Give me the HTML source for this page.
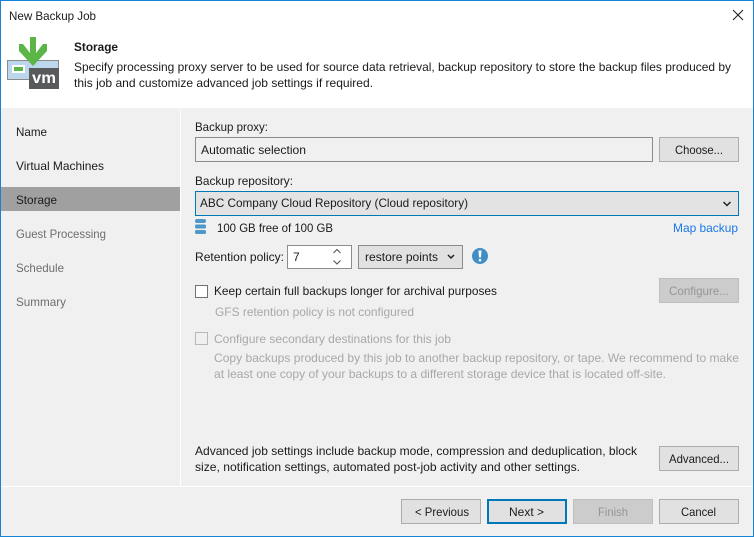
<!DOCTYPE html>
<html><head><meta charset="utf-8"><style>
html,body{margin:0;padding:0;background:#f0f0f0}
svg{display:block}
text{font-family:"Liberation Sans",sans-serif;font-size:12px;fill:#1a1a1a}
.g{fill:#959595}.d{fill:#a8a8a8}.s{fill:#6e6e6e}
.b{fill:#e1e1e1;stroke:#adadad}
</style></head><body>
<svg width="754" height="537" viewBox="0 0 754 537" xmlns="http://www.w3.org/2000/svg">
<rect width="754" height="537" fill="#f0f0f0"/>
<rect x="1" y="1" width="752" height="107" fill="#fff"/>
<rect x="180" y="109" width="1" height="377" fill="#fff"/>
<rect x="1" y="486" width="752" height="1" fill="#fff"/>
<rect x="1" y="187" width="179" height="24" fill="#a0a0a0"/>
<rect x=".5" y=".5" width="753" height="536" fill="none" stroke="#1583d6"/>
<text x="9" y="20" textLength="87" lengthAdjust="spacingAndGlyphs">New Backup Job</text>
<path d="M733 10l10 10M743 10l-10 10" stroke="#222" stroke-width="1.1" fill="none"/>
<rect x="7.500" y="60.500" width="51" height="19" fill="#bcd6ee" stroke="#8a8a8a"/>
<rect x="12" y="65" width="13" height="8" fill="#fff"/><rect x="14" y="67" width="9" height="4" fill="#5cb547"/>
<path d="M30 37H36V53L43 44H47V51L33 66L19 51V44H23L30 53Z" fill="#5cb547"/>
<rect x="29" y="68" width="30" height="21" fill="#58595b"/>
<text x="32" y="83" style="font-size:16px;font-weight:bold;fill:#fff" textLength="24" lengthAdjust="spacingAndGlyphs">vm</text>
<text x="74" y="51" font-weight="bold" textLength="44" lengthAdjust="spacingAndGlyphs">Storage</text>
<text x="74" y="71" textLength="657" lengthAdjust="spacingAndGlyphs">Specify processing proxy server to be used for source data retrieval, backup repository to store the backup files produced by</text>
<text x="74" y="87" textLength="299" lengthAdjust="spacingAndGlyphs">this job and customize advanced job settings if required.</text>
<text x="16" y="136" textLength="31" lengthAdjust="spacingAndGlyphs">Name</text>
<text x="16" y="170" textLength="88" lengthAdjust="spacingAndGlyphs">Virtual Machines</text>
<text x="16" y="204" textLength="41" lengthAdjust="spacingAndGlyphs">Storage</text>
<text x="16" y="238" class="s" textLength="90" lengthAdjust="spacingAndGlyphs">Guest Processing</text>
<text x="16" y="272" class="s" textLength="48" lengthAdjust="spacingAndGlyphs">Schedule</text>
<text x="16" y="306" class="s" textLength="50" lengthAdjust="spacingAndGlyphs">Summary</text>
<text x="195" y="131" textLength="73" lengthAdjust="spacingAndGlyphs">Backup proxy:</text>
<rect x="195.500" y="137.500" width="457" height="24" fill="#f0f0f0" stroke="#8c8c8c"/>
<text x="201" y="154" textLength="105" lengthAdjust="spacingAndGlyphs">Automatic selection</text>
<rect x="659.500" y="137.500" width="79" height="24" class="b"/>
<text x="675" y="154" textLength="48" lengthAdjust="spacingAndGlyphs">Choose...</text>
<text x="195" y="185" textLength="98" lengthAdjust="spacingAndGlyphs">Backup repository:</text>
<rect x="195.500" y="191.500" width="543" height="24" fill="#e3e3e3" stroke="#0078b8"/>
<text x="200" y="207" textLength="268" lengthAdjust="spacingAndGlyphs">ABC Company Cloud Repository (Cloud repository)</text>
<path d="M723.500 202l3.500 3.500 3.500-3.500" fill="none" stroke="#222" stroke-width="1.500"/>
<rect x="195" y="219" width="11" height="4" rx="2" fill="#4d97c9"/>
<rect x="195" y="224.500" width="11" height="4" rx="1.500" fill="#4d97c9"/>
<rect x="195" y="230" width="11" height="4" rx="1.500" fill="#4d97c9"/>
<text x="217" y="232" textLength="116" lengthAdjust="spacingAndGlyphs">100 GB free of 100 GB</text>
<text x="673" y="232" style="fill:#1a78e6" textLength="65" lengthAdjust="spacingAndGlyphs">Map backup</text>
<text x="195" y="261" textLength="89" lengthAdjust="spacingAndGlyphs">Retention policy:</text>
<rect x="287.500" y="245.500" width="64" height="23" fill="#fff" stroke="#8c8c8c"/>
<text x="293" y="261">7</text>
<path d="M333.500 253l3.500-3.500 3.500 3.500M333.500 260.500l3.500 3.500 3.500-3.500" fill="none" stroke="#555" stroke-width="1.100"/>
<rect x="358.500" y="245.500" width="104" height="23" fill="#e1e1e1" stroke="#8c8c8c"/>
<text x="365" y="261" textLength="73" lengthAdjust="spacingAndGlyphs">restore points</text>
<path d="M448 255l3 3 3-3" fill="none" stroke="#222" stroke-width="1.500"/>
<circle cx="480" cy="256" r="8" fill="#3f8fc6"/>
<path d="M478.500 250.500h3l-.5 7h-2zM478.800 259h2.400v2.400h-2.400z" fill="#fff"/>
<rect x="195.500" y="285.500" width="12" height="12" fill="#fff" stroke="#707070"/>
<text x="214" y="295" textLength="283" lengthAdjust="spacingAndGlyphs">Keep certain full backups longer for archival purposes</text>
<rect x="659.500" y="278.500" width="79" height="24" fill="#cccccc" stroke="#bfbfbf"/>
<text x="669" y="295" class="g" textLength="60" lengthAdjust="spacingAndGlyphs">Configure...</text>
<text x="215" y="316" class="d" textLength="199" lengthAdjust="spacingAndGlyphs">GFS retention policy is not configured</text>
<rect x="195.500" y="332.500" width="12" height="12" fill="#f0f0f0" stroke="#b8b8b8"/>
<text x="214" y="343" class="d" textLength="237" lengthAdjust="spacingAndGlyphs">Configure secondary destinations for this job</text>
<text x="214" y="362" class="d" textLength="525" lengthAdjust="spacingAndGlyphs">Copy backups produced by this job to another backup repository, or tape. We recommend to make</text>
<text x="214" y="378" class="d" textLength="452" lengthAdjust="spacingAndGlyphs">at least one copy of your backups to a different storage device that is located off-site.</text>
<text x="195" y="455" textLength="442" lengthAdjust="spacingAndGlyphs">Advanced job settings include backup mode, compression and deduplication, block</text>
<text x="195" y="471" textLength="385" lengthAdjust="spacingAndGlyphs">size, notification settings, automated post-job activity and other settings.</text>
<rect x="659.500" y="446.500" width="79" height="24" class="b"/>
<text x="669" y="463" textLength="60" lengthAdjust="spacingAndGlyphs">Advanced...</text>
<rect x="401.500" y="499.500" width="79" height="24" class="b"/>
<text x="415" y="516" textLength="54" lengthAdjust="spacingAndGlyphs">&lt; Previous</text>
<rect x="488" y="500" width="78" height="23" fill="#e1e1e1" stroke="#0078b8" stroke-width="2"/>
<text x="509" y="516" textLength="35" lengthAdjust="spacingAndGlyphs">Next &gt;</text>
<rect x="573.500" y="499.500" width="79" height="24" fill="#cccccc" stroke="#bfbfbf"/>
<text x="598" y="516" class="g" textLength="30" lengthAdjust="spacingAndGlyphs">Finish</text>
<rect x="659.500" y="499.500" width="79" height="24" class="b"/>
<text x="681" y="516" textLength="35" lengthAdjust="spacingAndGlyphs">Cancel</text>
</svg>
</body></html>
